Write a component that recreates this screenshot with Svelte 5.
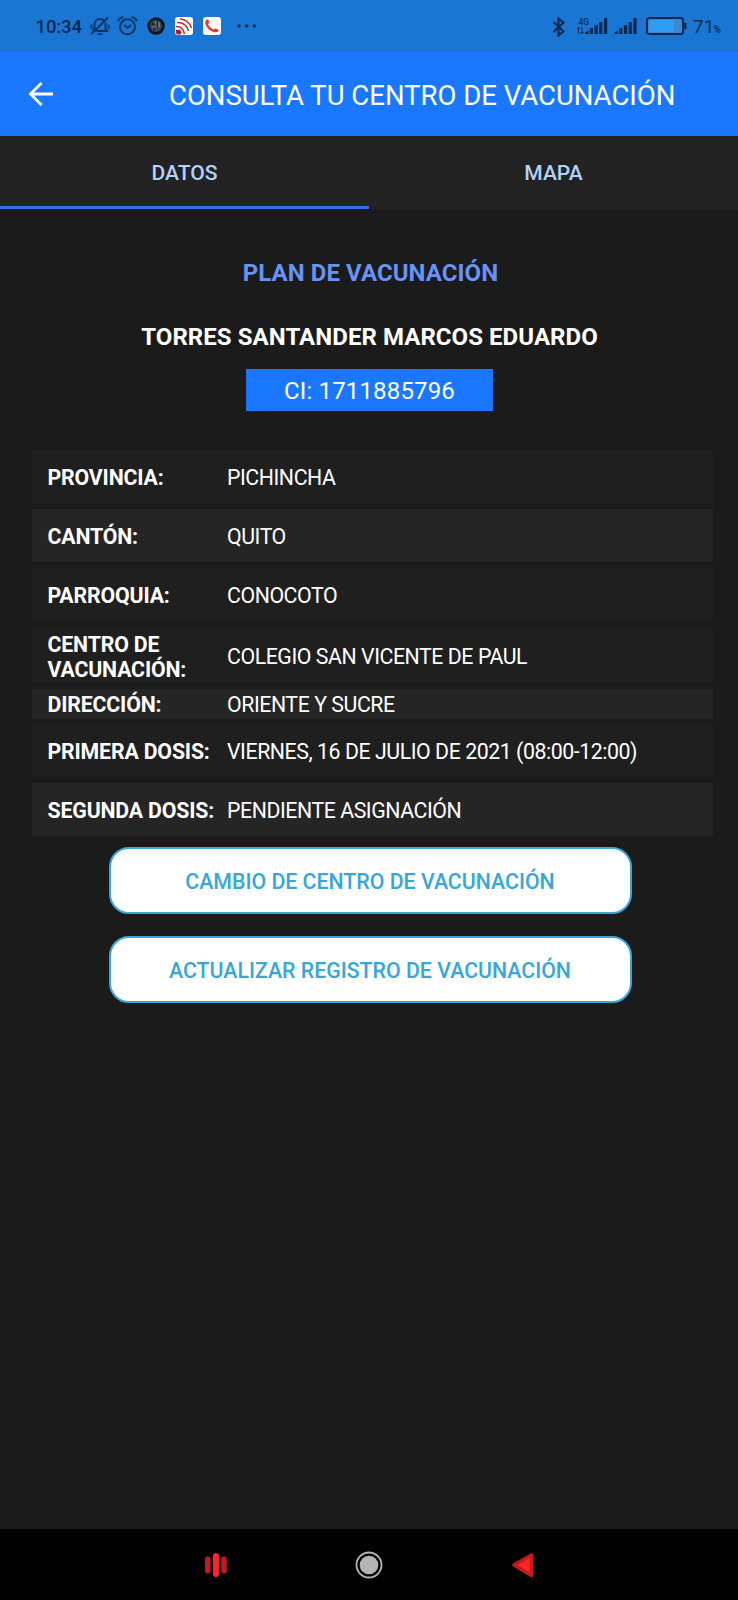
<script>
  const rows = [
    { label: 'PROVINCIA:', value: 'PICHINCHA' },
    { label: 'CANTÓN:', value: 'QUITO', alt: true },
    { label: 'PARROQUIA:', value: 'CONOCOTO' },
    { label: 'CENTRO DE VACUNACIÓN:', value: 'COLEGIO SAN VICENTE DE PAUL', after: true },
    { label: 'DIRECCIÓN:', value: 'ORIENTE Y SUCRE', alt: true, short: true },
    { label: 'PRIMERA DOSIS:', value: 'VIERNES, 16 DE JULIO DE 2021 (08:00-12:00)' },
    { label: 'SEGUNDA DOSIS:', value: 'PENDIENTE ASIGNACIÓN', alt: true }
  ];
</script>

<div class="screen">
  <div class="status">
    <span class="time">10:34</span>
    <svg class="bell" width="20" height="20" viewBox="0 0 20 20" fill="none" stroke="#0b3566" stroke-width="2" stroke-linecap="round">
      <path d="M4.500 12V8.500C4.500 5 7 3 10 3c1.300 0 2.400.3 3.300 1M15.500 7.500v5l1.500 2.500H7M4.500 12L3 15M8.500 18h3M2 17.500L17.500 2M1.300 9.500v2.500M18.700 9.500v2.500" />
    </svg>
    <svg class="alarm" width="21" height="20" viewBox="0 0 21 20" fill="none" stroke="#0b3566" stroke-width="2" stroke-linecap="round">
      <circle cx="10.500" cy="10.800" r="7.500" />
      <path d="M1.500 4.500Q2.500 2.300 5.500 1.300M19.500 4.500Q18.500 2.300 15.500 1.300M7.700 9.500L10.500 11.900L13.500 9.500" />
    </svg>
    <svg class="game" width="18" height="18" viewBox="0 0 18 18">
      <circle cx="9" cy="9" r="8.700" fill="#10151c" />
      <circle cx="9" cy="9" r="6" fill="#34465a" />
      <path d="M5 6h2v2H5zM10 5h1v6h-1zM6 12h3v1H6z" fill="#142435" />
      <path d="M7.500 8.500h2v2h-2z" fill="#a05650" /><path d="M11.500 5.500h1v5h-1zM4.500 9.500h2v1h-2zM8 4.500h1v2H8z" fill="#8597a9" />
    </svg>
    <svg class="cast" width="18" height="18" viewBox="0 0 18 18">
      <rect width="18" height="18" rx="3" fill="#fff" />
      <g fill="none" stroke="#b83232" stroke-width="1.500">
        <path d="M1 9.500Q8 9 9.500 17M2 5.500Q11 5 13.500 14M5 2Q13.500 2.500 16.500 11" />
      </g>
      <path d="M1 13l4-.5 1.500 3L5.500 17.500H3a2 2 0 0 1-2-2z" fill="#bc1e20" />
    </svg>
    <svg class="phone" width="18" height="18" viewBox="0 0 18 18">
      <rect width="18" height="18" rx="3" fill="#fff" />
      <path d="M3.500 2.500L5.700 3 6 6 5 7.200Q6.500 11 10.500 12.500l1.400-1 3.200.8.400 2Q13.500 16 10.500 15 4.500 13 2.600 7.500 1.900 4 3.500 2.500z" fill="#e23a32" />
    </svg>
    <svg class="dots" width="20" height="4" viewBox="0 0 20 4" fill="#0b2d5c"><circle cx="2" cy="2" r="1.700" /><circle cx="9.700" cy="2" r="1.700" /><circle cx="17.300" cy="2" r="1.700" /></svg>
    <div class="right">
      <svg width="186" height="24" viewBox="0 0 186 24" fill="#08284f">
        <path d="M1.500 7l10 9.500-5 4V3.500l5 4L1.500 17" fill="none" stroke="#08284f" stroke-width="2" />
        <text x="26.500" y="9.500" font-size="8.500" font-weight="500">4G</text>
        <path d="M26.500 18.500V12.500m-1.500 1.500 1.500-1.800L28 14M30 12.500v6m-1.500-1.500 1.500 1.800L31.500 17" fill="none" stroke="#08284f" stroke-width="1" />
        <path d="M33 19v-1.500l3.500-2v3.500zM37.800 13h3.200V19h-3.200zM42.500 10h3.200V19h-3.200zM47.200 7h3.200v12h-3.200zM52 3h3.200v16H52z" />
        <path d="M62.500 19v-1.500l3.500-2v3.500zM67.200 13h3.200V19h-3.200zM71.900 10h3.200V19h-3.200zM76.600 7h3.200v12h-3.200zM81.400 3h3.200v16h-3.200z" />
        <rect x="95" y="3" width="36" height="16" rx="2.500" fill="#3f87cf" stroke="#08284f" stroke-width="2" />
        <rect x="97" y="5" width="25" height="12" rx="1" fill="#2c9cf5" />
        <path d="M132 8h2.500v6H132z" />
        <text x="141" y="18" font-size="19">71</text>
        <text x="161.500" y="18" font-size="10" font-weight="500">%</text>
      </svg>
    </div>
  </div>

  <header>
    <svg width="26" height="26" viewBox="0 0 26 26" fill="none" stroke="#fff" stroke-width="2.800"><path d="M25 13H3M13.500 2L2.500 13l11 11" /></svg>
    <h1>CONSULTA TU CENTRO DE VACUNACIÓN</h1>
  </header>

  <nav class="tabs">
    <div class="tab on"><span>DATOS</span></div>
    <div class="tab"><span>MAPA</span></div>
  </nav>

  <main>
    <h2>PLAN DE VACUNACIÓN</h2>
    <h3>TORRES SANTANDER MARCOS EDUARDO</h3>
    <div class="ci">CI: 1711885796</div>
    <div class="rows">
      {#each rows as r}
        <div class="row" class:alt={r.alt} class:short={r.short} class:after={r.after}>
          <b>{r.label}</b><span>{r.value}</span>
        </div>
      {/each}
    </div>
    <div class="actions">
      <button>CAMBIO DE CENTRO DE VACUNACIÓN</button>
      <button>ACTUALIZAR REGISTRO DE VACUNACIÓN</button>
    </div>
  </main>

  <footer>
    <svg width="24" height="26" viewBox="0 0 24 26"><rect x="1" y="4.500" width="5.500" height="17" rx="2.700" fill="#c5191c" /><rect x="9" y="1" width="6" height="24" rx="3" fill="#fb2526" /><rect x="17.300" y="4.500" width="5.500" height="17" rx="2.700" fill="#c5191c" /></svg>
    <svg width="28" height="28" viewBox="0 0 28 28"><circle cx="14" cy="14" r="12.500" fill="none" stroke="#b5b5b5" stroke-width="1.800" /><circle cx="14" cy="14" r="9.300" fill="#b5b5b5" /></svg>
    <svg width="24" height="26" viewBox="0 0 24 26"><path d="M3 13L20.500 3v20.500z" fill="#fb2526" stroke="#c5191c" stroke-width="3.500" stroke-linejoin="round" /></svg>
  </footer>
</div>

<style>
  :global(body) { background: #1b1b1b; }
  .screen { width: 738px; height: 1600px; display: flex; flex-direction: column; background: #1b1b1b; font-family: Roboto, sans-serif; color: #fff; overflow: hidden; white-space: nowrap; }
  svg { display: block; flex: none; }
  .status { height: 52px; flex: none; display: flex; align-items: center; background: #1976d2; color: #08284f; padding-left: 35.500px; box-sizing: border-box; }
  .time { width: 54.500px; font-size: 18.500px; font-weight: 500; letter-spacing: -0.100px; line-height: 52px; padding-top: 1px; }
  .alarm { margin-left: 7px; }
  .game { margin-left: 9px; }
  .cast { margin-left: 9.500px; }
  .phone { margin-left: 10px; }
  .dots { margin-left: 16.500px; }
  .right { margin-left: auto; padding-top: 1px; }
  header { height: 84px; flex: none; background: #1a77ff; display: flex; align-items: center; padding-left: 28px; box-sizing: border-box; }
  h1, h2, h3 { margin: 0; }
  h1 { margin-left: 115px; padding-top: 4px; font-size: 27.500px; font-weight: 400; line-height: 32px; }
  .tabs { display: flex; height: 73px; flex: none; background: #222; }
  .tab { flex: 1; display: flex; justify-content: center; padding-top: 24px; box-sizing: border-box; font-size: 21.100px; font-weight: 500; line-height: 26px; color: #b3d2f8; border-bottom: 3px solid transparent; }
  .tab.on { border-bottom-color: #2e74e0; }
  main { flex: 1; display: flex; flex-direction: column; align-items: center; }
  h2 { margin-top: 49px; padding-left: 3px; font-size: 24px; line-height: 30px; color: #6793f5; font-weight: 700; letter-spacing: 0.060px; }
  h3 { margin-top: 34px; padding-left: 1px; font-size: 24px; line-height: 30px; font-weight: 700; letter-spacing: 0.060px; }
  .ci { margin-top: 17px; margin-left: 1px; width: 247px; height: 42px; background: #1a77ff; text-align: center; font-size: 24px; line-height: 45px; letter-spacing: 0.150px; }
  .rows { width: 681px; margin: 39px 0 0 32px; align-self: flex-start; display: flex; flex-direction: column; gap: 6px; }
  .row { height: 53px; display: grid; grid-template-columns: 179.500px 1fr; align-items: center; padding-left: 15.500px; background: #1f1f1f; box-sizing: border-box; font-size: 21.300px; line-height: 25px; padding-top: 1px; }
  .row b { width: 172px; white-space: normal; letter-spacing: -0.160px; }
  .row span { letter-spacing: -0.440px; }
  .row.alt { background: #252525; }
  .row.short { height: 30px; margin: 1px 0 -1px; }
  .row.after { margin-top: 2px; padding-top: 2px; }
  .actions { display: flex; flex-direction: column; gap: 22px; margin: 11px 0 0 2px; }
  button { width: 523px; height: 67px; box-sizing: border-box; border: 2px solid #3ba7d7; border-radius: 20px; background: #fff; color: #36a7db; font: 500 21.300px Roboto, sans-serif; padding: 2px 0 0; }
  footer { height: 71px; flex: none; background: #000; display: flex; align-items: center; justify-content: center; gap: 127.500px; }
</style>
